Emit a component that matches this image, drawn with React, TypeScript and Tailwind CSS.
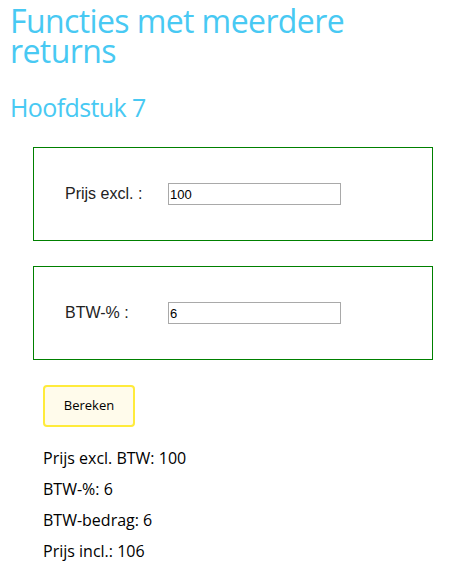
export default function App() {
  return (
    <div className="min-h-screen bg-white px-[10px] pt-[6px] pb-4 font-['Open_Sans',sans-serif]">
      <h1 className="text-[32px] leading-[30px] font-normal tracking-[-0.6px] text-[#48c9f3]">
        Functies met meerdere returns
      </h1>
      <h2 className="mt-[26px] text-[25px] leading-[30px] font-normal tracking-[-0.6px] text-[#48c9f3]">
        Hoofdstuk 7
      </h2>

      <div className="mt-[25px] ml-[23px] w-[400px]">
        <div className="flex h-[94px] items-center border border-[#008000] pl-[31px]">
          <label className="w-[103px] font-['Liberation_Sans',sans-serif] text-[16px] text-[#222]">
            Prijs excl. :
          </label>
          <input
            defaultValue="100"
            className="h-[22px] w-[173px] border border-[#a9a9a9] px-[1px] font-['Liberation_Sans',sans-serif] text-[13px] text-black outline-none"
          />
        </div>
        <div className="mt-[25px] flex h-[94px] items-center border border-[#008000] pl-[31px]">
          <label className="w-[103px] font-['Liberation_Sans',sans-serif] text-[16px] text-[#222]">
            BTW-% :
          </label>
          <input
            defaultValue="6"
            className="h-[22px] w-[173px] border border-[#a9a9a9] px-[1px] font-['Liberation_Sans',sans-serif] text-[13px] text-black outline-none"
          />
        </div>
      </div>

      <div className="ml-[33px] mt-[25px]">
        <button className="h-[42px] w-[92px] rounded-[4px] border-2 border-[#ffeb3b] bg-[#fffbeb] text-[13px] text-black">
          Bereken
        </button>
        <div className="mt-[16px] flex flex-col text-[16px] leading-[31px] text-black">
          <p>Prijs excl. BTW: 100</p>
          <p>BTW-%: 6</p>
          <p>BTW-bedrag: 6</p>
          <p>Prijs incl.: 106</p>
        </div>
      </div>
    </div>
  );
}
